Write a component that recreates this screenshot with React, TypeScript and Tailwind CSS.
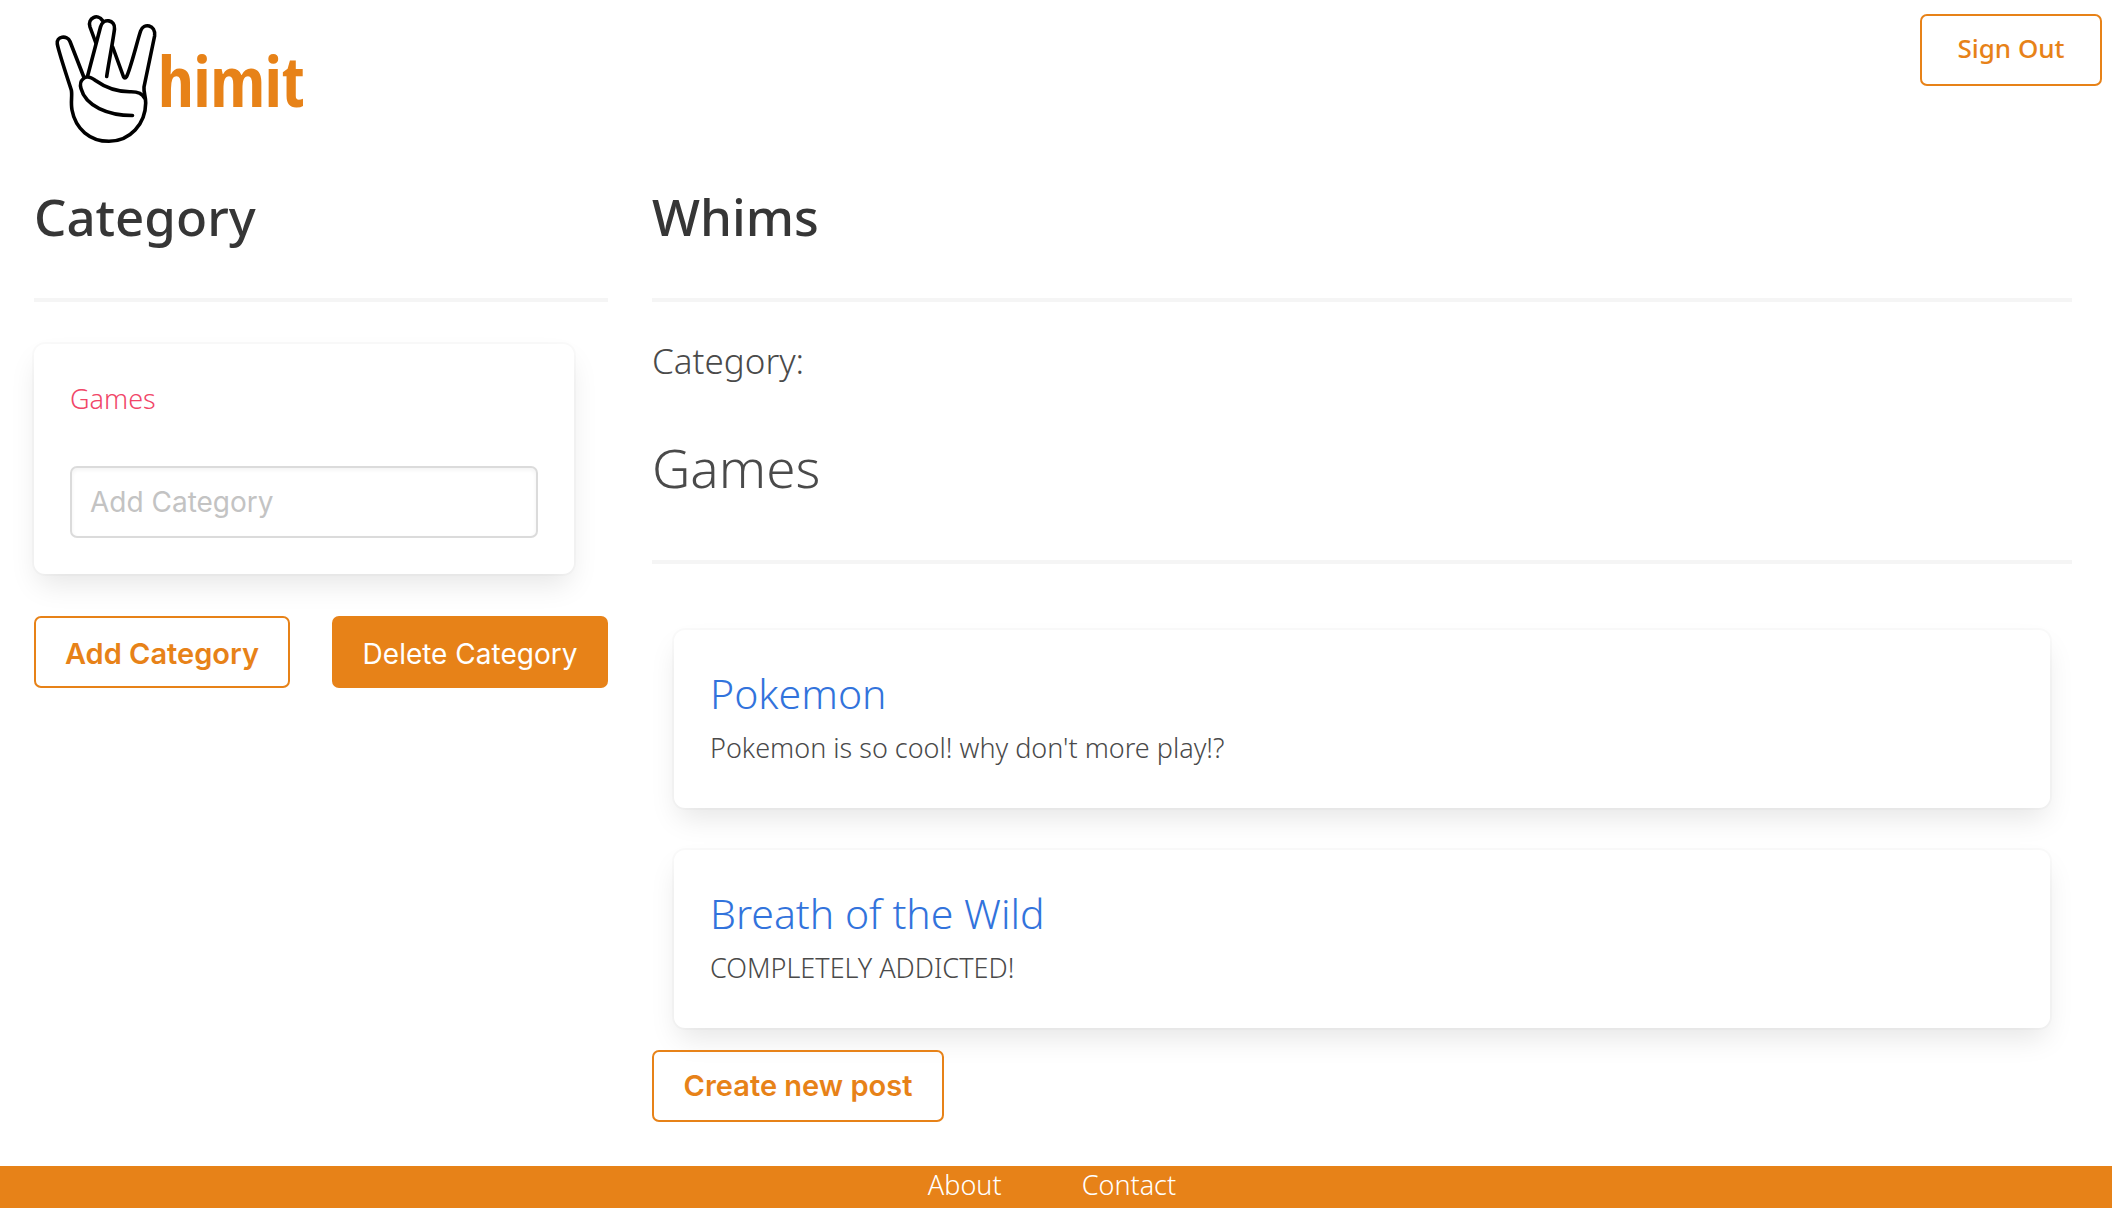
import { useState } from "react";

const outlineButton =
  "h-[72px] cursor-pointer rounded-[7px] border-2 border-[#e78218] bg-transparent text-[#e78218]";
const card =
  "rounded-[11px] bg-white shadow-[0_14px_29px_-4px_rgba(10,10,10,0.1),0_0_0_2px_rgba(10,10,10,0.02)]";
const pageTitle = "text-[51px] leading-[64px] font-medium text-[#363636]";

const posts = [
  { title: "Pokemon", body: "Pokemon is so cool! why don't more play!?" },
  { title: "Breath of the Wild", body: "COMPLETELY ADDICTED!" },
];

function Logo() {
  return (
    <a href="#" aria-label="Whimit" className="ml-[52px] flex items-start text-[#e78218]">
      <svg
        viewBox="52 12 106 134"
        className="mt-3 h-[134px] w-[106px]"
        fill="none"
        stroke="#000"
        strokeWidth="3.6"
        strokeLinecap="round"
        strokeLinejoin="round"
        aria-hidden="true"
      >
        <path d="M84 77.5 L70 41.5 C67 34.5 56 36.5 57.3 44 C58 48 69 83 71.3 90 C72.5 95 70.5 102 72 110 C75.5 129 90 141.3 109 141.3 C130 141.3 145.5 124 145.7 103 C145.8 96 143.5 93 144 87 L154.6 36 C156 24.5 143.5 22.5 140.6 31 C137.5 40 130 71 126.3 77 C125.5 78.5 124.3 78.3 123.6 77 L112.7 47" />
        <path d="M87.6 76 L100.5 27 C103 17.5 115.5 19.5 114.5 29 C113.5 38 108 67 106.7 76.5" />
        <path d="M95.7 42.5 L90 27 C87 18 98 13.2 102.5 20.5" />
        <path d="M144.5 98 C142 92.5 137 91.7 131 91.7 C117 92 106 88 95.5 80.5 C91.5 77.5 87 75.5 83.5 78.5 C80 81.5 79.8 84 81 88.5 C85.5 106 108 115.5 132.5 115.5" />
      </svg>
      <span className="mt-[34px] font-['Open_Sans_Condensed'] text-[70px] leading-[92px] font-bold">
        himit
      </span>
    </a>
  );
}

export default function App() {
  const [draft, setDraft] = useState("");

  return (
    <div className="flex min-h-screen flex-col bg-white font-['Noto_Sans',sans-serif] text-[27px] leading-[38px] font-light text-[#4a4a4a]">
      <header className="flex h-[184px] items-start justify-between pr-[10px]">
        <Logo />
        <button type="button" className={`${outlineButton} mt-[14px] w-[182px] pb-1 text-[26px] font-medium`}>
          Sign Out
        </button>
      </header>

      <main className="grid grow grid-cols-[574fr_1420fr] gap-11 pr-10 pb-11 pl-[34px]">
        <section>
          <h1 className={pageTitle}>Category</h1>
          <hr className="mt-[50px] mb-[42px] h-1 border-0 bg-[#f5f5f5]" />
          <div className={`${card} mr-[34px] p-9`}>
            <a href="#games" className="block text-[#f14668]">
              Games
            </a>
            <input
              type="text"
              aria-label="Add Category"
              placeholder="Add Category"
              value={draft}
              onChange={(e) => setDraft(e.target.value)}
              className="mt-12 block h-[72px] w-full rounded-[7px] border-2 border-[#dbdbdb] px-[18px] font-['Inter',sans-serif] text-[28px] font-normal text-[#363636] shadow-[inset_0_2px_4px_rgba(10,10,10,0.05)] outline-none placeholder:text-[#c3c3c3]"
            />
          </div>
          <div className="mt-[42px] flex justify-between font-['Inter',sans-serif]">
            <button type="button" className={`${outlineButton} w-[256px] pt-1 text-[29px] font-semibold`}>
              Add Category
            </button>
            <button
              type="button"
              className="h-[72px] w-[276px] cursor-pointer rounded-[7px] bg-[#e78218] pt-1 text-[28px] font-normal text-white"
            >
              Delete Category
            </button>
          </div>
        </section>

        <section>
          <h1 className={pageTitle}>Whims</h1>
          <hr className="mt-[50px] mb-9 h-1 border-0 bg-[#f5f5f5]" />
          <p className="text-[35px] leading-[46px]">Category:</p>
          <h2 className="mt-[52px] text-[53px] leading-[64px]">Games</h2>
          <hr className="mt-[60px] mb-[66px] h-1 border-0 bg-[#f5f5f5]" />
          <div className="flex flex-col gap-[42px] px-[22px]">
            {posts.map((post) => (
              <article key={post.title} className={`${card} p-9`}>
                <h3 className="text-[41px] leading-[54px]">
                  <a href="#post" className="text-[#3273dc]">
                    {post.title}
                  </a>
                </h3>
                <p className="mt-2 mb-1 leading-[40px]">{post.body}</p>
              </article>
            ))}
          </div>
          <button
            type="button"
            className={`${outlineButton} mt-[22px] w-[292px] font-['Inter',sans-serif] text-[29px] font-semibold`}
          >
            Create new post
          </button>
        </section>
      </main>

      <footer className="flex justify-center gap-20 bg-[#e78218] pr-2 pb-1 text-white">
        <a href="#about">About</a>
        <a href="#contact">Contact</a>
      </footer>
    </div>
  );
}
